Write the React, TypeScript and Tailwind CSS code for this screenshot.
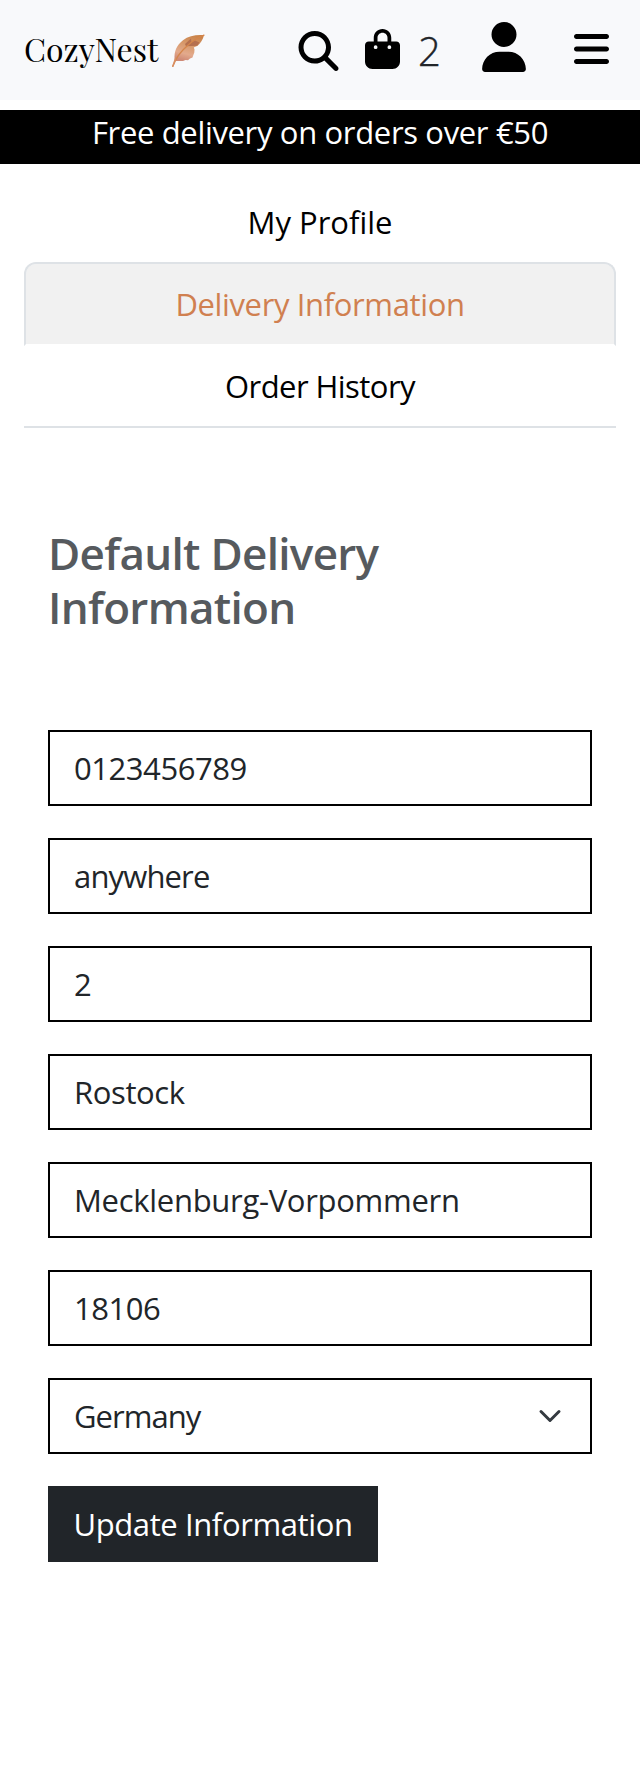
import { FaMagnifyingGlass, FaBagShopping, FaUser, FaBars } from "react-icons/fa6";

const fields = [
  { name: "phone", value: "0123456789", cls: "tracking-[-0.45px]" },
  { name: "street", value: "anywhere", cls: "tracking-[-0.85px]" },
  { name: "house", value: "2", cls: "" },
  { name: "city", value: "Rostock", cls: "tracking-[-0.38px]" },
  { name: "county", value: "Mecklenburg-Vorpommern", cls: "tracking-[-0.29px]" },
  { name: "postcode", value: "18106", cls: "tracking-[-0.5px]" },
];

function Leaf() {
  return (
    <svg viewBox="0 0 44 44" className="h-11 w-11" aria-hidden="true">
      <defs>
        <linearGradient id="leaf" x1="0.7" y1="0" x2="0.4" y2="1">
          <stop offset="0" stopColor="#c98248" />
          <stop offset="0.45" stopColor="#d99c70" />
          <stop offset="0.75" stopColor="#e3aa8c" />
          <stop offset="1" stopColor="#cf8a76" />
        </linearGradient>
      </defs>
      <path d="M39 5.2C31 4.6 23.5 6 18 10.2C11.5 15.2 9 21.5 9.6 29.5L10 31H18L20.5 30L23 30.2L25 28.5L27.5 27.6L28 26L29.3 22.5L29.5 19.5L28.8 17.6L32.6 15.8C35.5 13.2 37.8 9.6 39 5.2Z" fill="url(#leaf)" />
      <path d="M26 8.5L20 14L21 16.2L32.2 15.8L34.5 12.6L30 10.5L26.5 12Z" fill="#b5704f" />
      <path d="M39 5.2C29.5 8 15 21 10.5 30.5L7.8 36.3" fill="none" stroke="#d4854a" strokeWidth="1.3" strokeLinecap="round" />
      <path d="M10.5 28.5L7.8 36.3" stroke="#d98f63" strokeWidth="1.5" strokeLinecap="round" />
    </svg>
  );
}

function Header() {
  return (
    <header className="flex h-[100px] bg-[#f8f9fb] text-black">
      <div className="flex w-[298px] pl-6">
        <span className="mt-[27px] h-[43px] w-[141px] font-['Playfair_Display','Liberation_Serif',serif] text-[32px] leading-[43px]">
          CozyNest
        </span>
        <div className="mt-[30px]">
          <Leaf />
        </div>
      </div>
      <FaMagnifyingGlass className="mt-[31px] h-10 w-[41px]" />
      <FaBagShopping className="mt-[29px] ml-[26px] h-10 w-[35px]" />
      <span className="mt-[21px] ml-[18px] w-[22px] text-[40px] leading-[60px] font-light text-[#212529] [-webkit-text-stroke:0.4px_#212529]">2</span>
      <FaUser className="mt-[22px] ml-[42px] h-[50px] w-11" />
      <FaBars className="mt-[29px] ml-12 h-10 w-[35px]" />
    </header>
  );
}

export default function App() {
  return (
    <div className="min-h-[1780px] w-[640px] bg-white font-['Open_Sans','Noto_Sans',sans-serif] text-[31px] leading-[48px] text-[#212529]">
      <Header />
      <div className="mt-2.5 h-[54px] bg-black text-center leading-[44px] tracking-[-0.34px] text-white">
        Free delivery on orders over €50
      </div>

      <nav className="mx-6 mt-4 flex flex-col border-b-2 border-[#dee2e6] text-center text-black">
        <a className="h-[82px] pt-[18px]">My Profile</a>
        <a className="h-[84px] rounded-t-xl border-2 border-[#dee2e6] border-b-white bg-[#f1f1f1] bg-clip-padding pt-4 tracking-[-0.37px] text-[#d08050]">
          Delivery Information
        </a>
        <a className="h-20 pt-4 tracking-[-0.55px]">Order History</a>
      </nav>

      <main className="mx-12 mt-[98px]">
        <h2 className="text-[44px] leading-[54px] font-semibold tracking-[-0.7px] text-[#565a5e]">
          Default Delivery
          <br />
          Information
        </h2>
        <form className="mt-24 flex flex-col items-start gap-8">
          {fields.map((f) => (
            <input
              key={f.name}
              name={f.name}
              defaultValue={f.value}
              className={`h-[76px] w-full border-2 border-black bg-white px-6 ${f.cls}`}
            />
          ))}
          <div className="flex h-[76px] w-full items-center justify-between border-2 border-black pr-7 pl-6">
            <span className="tracking-[-0.95px]">Germany</span>
            <svg viewBox="0 0 16 16" className="h-6 w-6" fill="none" stroke="#343a40" strokeWidth="2" strokeLinecap="round" strokeLinejoin="round">
              <path d="m2 5 6 6 6-6" />
            </svg>
          </div>
          <button type="button" className="h-[76px] w-[330px] bg-[#212529] text-center tracking-[-0.39px] whitespace-nowrap text-white">
            Update Information
          </button>
        </form>
      </main>
    </div>
  );
}
